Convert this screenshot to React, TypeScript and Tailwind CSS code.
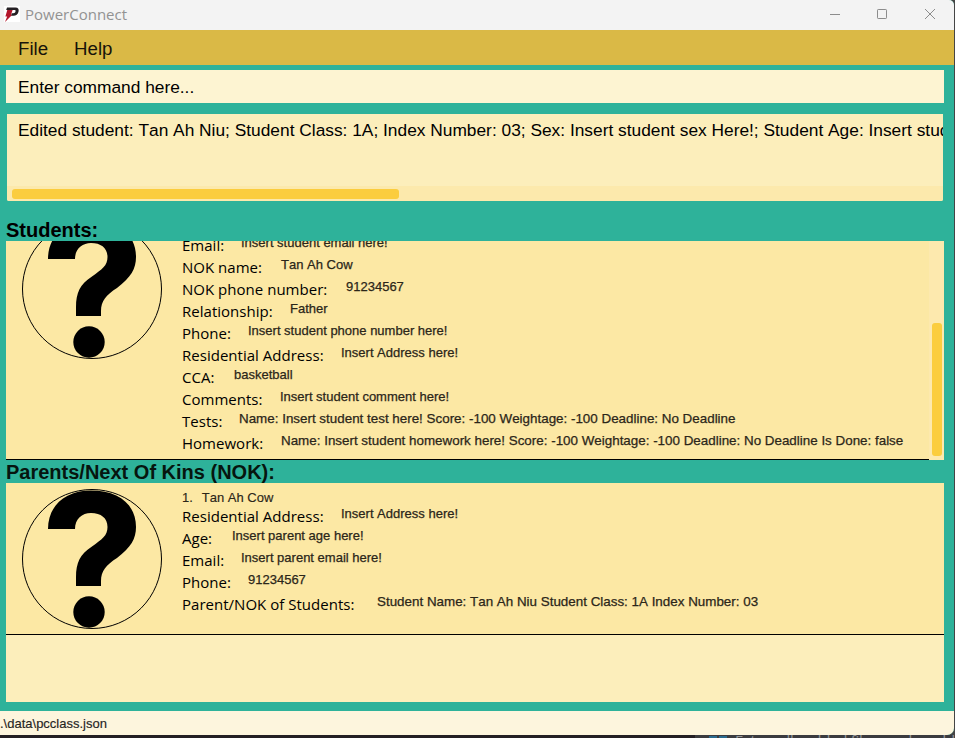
type Row = { label: string; value: string; w: string; wide?: boolean };

const studentRows: Row[] = [
  { label: "Email:", value: "Insert student email here!", w: "w-[59px]" },
  { label: "NOK name:", value: "Tan Ah Cow", w: "w-[99px]" },
  { label: "NOK phone number:", value: "91234567", w: "w-[164px]" },
  { label: "Relationship:", value: "Father", w: "w-[108px]" },
  { label: "Phone:", value: "Insert student phone number here!", w: "w-[66px]" },
  { label: "Residential Address:", value: "Insert Address here!", w: "w-[159px]" },
  { label: "CCA:", value: "basketball", w: "w-[52px]" },
  { label: "Comments:", value: "Insert student comment here!", w: "w-[98px]" },
  { label: "Tests:", value: "Name: Insert student test here! Score: -100 Weightage: -100 Deadline: No Deadline", w: "w-[57px]", wide: true },
  { label: "Homework:", value: "Name: Insert student homework here! Score: -100 Weightage: -100 Deadline: No Deadline Is Done: false", w: "w-[99px]", wide: true },
];

const parentRows: Row[] = [
  { label: "Residential Address:", value: "Insert Address here!", w: "w-[159px]" },
  { label: "Age:", value: "Insert parent age here!", w: "w-[50px]" },
  { label: "Email:", value: "Insert parent email here!", w: "w-[59px]" },
  { label: "Phone:", value: "91234567", w: "w-[66px]" },
  { label: "Parent/NOK of Students:", value: "Student Name: Tan Ah Niu Student Class: 1A Index Number: 03", w: "w-[195px]", wide: true },
];

function Avatar() {
  return (
    <svg width="140" height="140" viewBox="0 0 140 140" className="shrink-0">
      <circle cx="70" cy="70" r="69.5" fill="none" stroke="#000" strokeWidth="1" />
      <path d="M26 40C26 17 43 1.5 69 1.5C96 1.5 114 15 114 38C114 50 109 58 95 69C84 76 79 82 79 92V97H54V88C54 74 58 65 70 57.5C80 50 85.5 47 85.5 38C85.5 29 79 24 69 24C60 24 53 30 53 40Z" />
      <circle cx="67" cy="123" r="15.7" />
    </svg>
  );
}

function Fields({ rows }: { rows: Row[] }) {
  return (
    <>
      {rows.map((r) => (
        <div key={r.label} className="flex h-[22px] shrink-0 whitespace-nowrap">
          <span className={`${r.w} shrink-0 font-['Open_Sans',sans-serif] text-[15px] leading-5 tracking-[0.02px] text-black`}>
            {r.label}
          </span>
          <span className={`${r.wide ? "text-[13.4px]" : "text-[13px]"} leading-4 text-[#2b2619] [-webkit-text-stroke:0.25px_#2b2619]`}>
            {r.value}
          </span>
        </div>
      ))}
    </>
  );
}

export default function App() {
  return (
    <div className="h-[738px] w-[955px] overflow-hidden bg-[#454545] font-['Liberation_Sans',Arial,sans-serif] [font-kerning:none]">
      <div className="flex h-[735px] w-[954px] flex-col overflow-hidden rounded-tr-[5px] rounded-br-[7px] bg-[#2eb29a]">
        <div className="flex h-[30px] shrink-0 items-center bg-[#f3f3f3]">
          <svg width="16" height="16" viewBox="0 0 16 16" className="-mt-[2px] ml-1">
            <rect width="16" height="16" fill="#fff" />
            <path d="M3 1.5H11.5C14.2 1.5 15.2 3.2 14.5 5.8C13.9 8.6 12 9.8 9.5 9.8H7L7.7 7.2H9.3C10.6 7.2 11.3 6.5 11.5 5.5C11.7 4.5 11.3 4.1 10.6 4.1H2.2Z" fill="#241f23" />
            <path d="M3.3 4.1H8.6L6.9 9H8L1 16L3.2 10.5H1.4Z" fill="#b3152a" />
          </svg>
          <span className="-mt-[2px] ml-[5px] font-['Open_Sans',sans-serif] text-[15px] leading-5 text-[#929292]">PowerConnect</span>
          <svg width="110" height="30" viewBox="0 0 110 30" className="ml-auto mr-[14px]" fill="none" stroke="#8c8c8c">
            <path d="M0 14.5H10" />
            <rect x="47.5" y="9.5" width="9" height="9" rx="0.7" />
            <path d="M95 9L105 19M105 9L95 19" />
          </svg>
        </div>
        <div className="flex h-[35px] shrink-0 items-center gap-[26px] bg-[#dab946] pl-[18px] pt-[2px] text-[18.67px] text-[#16130a]">
          <span>File</span>
          <span>Help</span>
        </div>
        <div className="ml-[6px] mt-[5px] flex h-[33px] w-[938px] shrink-0 items-center bg-[#fdf4d2] pl-3 pt-[3px] text-[17.33px] text-black">
          Enter command here...
        </div>
        <div className="ml-[7px] mt-[11px] flex h-[87px] w-[936px] shrink-0 flex-col overflow-hidden rounded-b-[2px] bg-[#fceebb]">
          <div className="h-[72px] whitespace-nowrap pl-[11px] pt-[6px] text-[17.33px] leading-5 text-black">
            Edited student: Tan Ah Niu; Student Class: 1A; Index Number: 03; Sex: Insert student sex Here!; Student Age: Insert student age here!
          </div>
          <div className="h-[15px] bg-[#fce9ac] pl-[5px] pt-[3px]">
            <div className="h-[10px] w-[387px] rounded-[3px] bg-[#fbcd3e]" />
          </div>
        </div>
        <div className="mt-[18px] h-[22px] shrink-0 pl-[6px] text-[20px] font-bold leading-[23px] text-black">Students:</div>
        <div className="ml-[6px] flex h-[219px] w-[938px] shrink-0 overflow-hidden bg-[#fde9ae]">
          <div className="flex h-[219px] w-[923px] items-end overflow-hidden border-b border-black bg-[#fce8a4]">
            <div className="ml-4 mb-[100px]">
              <Avatar />
            </div>
            <div className="mb-1 ml-5 flex flex-col">
              <Fields rows={studentRows} />
            </div>
          </div>
          <div className="w-[15px] pl-[3px] pt-[82px]">
            <div className="h-[133px] w-[10px] rounded-[3px] bg-[#fbcd3e]" />
          </div>
        </div>
        <div className="h-[23px] shrink-0 pl-[6px] text-[20px] font-bold leading-6 text-[#06150f]">Parents/Next Of Kins (NOK):</div>
        <div className="ml-[6px] h-[219px] w-[938px] shrink-0 bg-[#fceebb]">
          <div className="flex h-[152px] border-b border-black bg-[#fce8a4] pl-4 pt-[6px]">
            <Avatar />
            <div className="ml-5 flex flex-col">
              <div className="flex h-[17px] gap-[9px] text-[13px] leading-[17px] text-[#2b2619] [-webkit-text-stroke:0.15px_#2b2619]">
                <span>1.</span>
                <span>Tan Ah Cow</span>
              </div>
              <Fields rows={parentRows} />
            </div>
          </div>
        </div>
        <div className="mt-[9px] h-6 shrink-0 bg-[#fdf5dd] text-[13px] leading-[25px] text-[#26241f] [-webkit-text-stroke:0.15px_#26241f]">.\data\pcclass.json</div>
      </div>
      <div className="flex h-[3px] overflow-hidden bg-[#241f24]">
        <div className="ml-[695px] flex h-[3px] flex-1 overflow-hidden bg-[#3b3b3f] pl-[14px]">
          <div className="mt-px h-2 w-2 shrink-0 bg-[#2a6a8f]" />
          <div className="ml-[2px] mt-px h-2 w-2 shrink-0 bg-[#2a6a8f]" />
          <span className="-mt-[5px] ml-2 whitespace-nowrap font-['Open_Sans',sans-serif] text-[15px] leading-5 tracking-[-0.3px] text-[#96989c]">Externally added files can be added</span>
        </div>
      </div>
    </div>
  );
}
